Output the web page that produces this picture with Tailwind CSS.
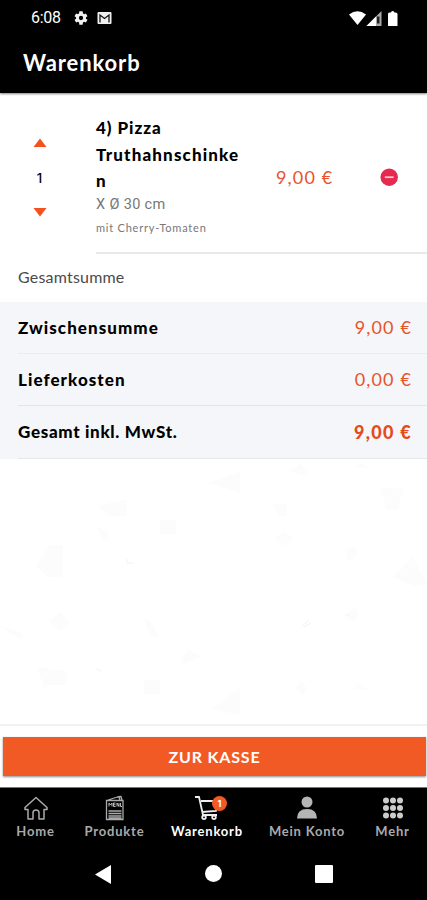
<!DOCTYPE html>
<html lang="de">
<head>
<meta charset="utf-8">
<meta name="viewport" content="width=device-width, initial-scale=1">
<title>Warenkorb</title>
<script src="https://cdn.jsdelivr.net/npm/@tailwindcss/browser@4"></script>
</head>
<body class="bg-white">
<div class="flex h-[900px] w-[427px] flex-col overflow-hidden bg-white font-['Lato',sans-serif] text-black">
  <header class="z-10 h-[93px] shrink-0 bg-black text-white shadow-[0_1px_2px_rgba(0,0,0,0.5)]">
    <div class="flex h-9 items-center pr-[29px] pl-[31px]">
      <span class="w-[42px] font-['Roboto',sans-serif] text-[16px] leading-9 tracking-[-0.3px]">6:08</span>
      <svg class="size-4" viewBox="0 0 24 24" fill="#f2f2f2"><path d="M19.4 13a7.700 7.700 0 0 0 0-2l2.300-1.700-2.300-4-2.700 1.100a8 8 0 0 0-1.800-1L14.500 2h-5l-.4 3.400a8 8 0 0 0-1.800 1L4.600 5.300l-2.300 4L4.600 11a7.700 7.700 0 0 0 0 2l-2.300 1.700 2.300 4 2.700-1.100a8 8 0 0 0 1.800 1l.4 3.400h5l.4-3.400a8 8 0 0 0 1.800-1l2.700 1.100 2.300-4zM12 15.200a3.200 3.200 0 1 1 0-6.400 3.200 3.200 0 0 1 0 6.400z"/></svg>
      <svg class="ml-2 h-3 w-[15px]" viewBox="0 0 15 12"><rect x=".5" width="14" height="12" rx="1" fill="#efefef"/><path d="M3 10.500V3l4.500 3.500L12 3v7.500" fill="none" stroke="#111" stroke-width="1.300"/></svg>
      <svg class="ml-auto h-[15px] w-[49px]" viewBox="0 0 49 15"><path d="M0 3.500Q8.500-3 17 3.500L8.500 14z" fill="#fff"/><path d="M17.500 15 32.500 0v15z" fill="#aaa"/><path d="M17.500 15 27 5.500V15z" fill="#fff"/><path d="M28 5.500h2.500v7H28z" fill="#222"/><path d="M39 3q0-1.500 1.500-1.500H42Q42 0 43.700 0t1.700 1.500h1.100Q48.500 1.500 48.500 3v12H39z" fill="#fff"/></svg>
    </div>
    <h1 class="pt-[12px] pl-[23px] text-[22px] leading-[30px] font-bold tracking-[0.9px]">Warenkorb</h1>
  </header>

  <section class="flex h-[161px] shrink-0">
    <div class="flex w-24 flex-col items-center pt-[45px] pr-[17px]">
      <svg class="h-[9px] w-[14px]" viewBox="0 0 14 9"><path d="M7 .5 13.500 9H.5z" fill="#f4511e"/></svg>
      <span class="my-5 h-[22px] font-['Inter',sans-serif] text-[13px] leading-[22px] font-medium">1</span>
      <svg class="mt-[-1px] h-[9px] w-[14px]" viewBox="0 0 14 9"><path d="M.5 0h13L7 8.500z" fill="#f4511e"/></svg>
    </div>
    <div class="flex flex-1 border-b-2 border-[#e9e9e9]">
      <div class="w-[165px] pt-[22px] whitespace-nowrap">
        <h2 class="text-[17px] leading-[26.5px] font-black tracking-[1.15px]"><span class="tracking-[0.95px]">4) Pizza</span><br>Truthahnschinke<br>n</h2>
        <p class="font-['Roboto',sans-serif] text-[14.5px] leading-5 tracking-[0.35px] text-[#777]">X Ø 30 cm</p>
        <p class="mt-[3px] text-[11px] leading-5 tracking-[0.78px] text-[#777]">mit Cherry-Tomaten</p>
      </div>
      <span class="w-[93px] pt-[70px] pl-[15px] text-[18px] leading-7 tracking-[1.15px] text-[#e7532a]">9,00 €</span>
      <svg class="mt-[75px] ml-[26px] size-[18px]" viewBox="0 0 18 18"><circle cx="9.200" cy="9.200" r="8.700" fill="#e6294f"/><path d="M4.800 9.200h8.800" stroke="#f8c8cf" stroke-width="1.800"/></svg>
    </div>
  </section>

  <h3 class="h-[48px] shrink-0 pl-[18px] text-[16px] leading-[46px] tracking-[0.2px] text-[#4a4a4a]">Gesamtsumme</h3>

  <dl class="shrink-0 bg-[#f4f6fa] pl-[18px] text-[17px]">
    <div class="flex h-[52px] items-center justify-between border-b border-[#e9ebee] pr-[15px]"><dt class="font-black tracking-[1.05px]">Zwischensumme</dt><dd class="text-[18px] tracking-[1.15px] text-[#e7532a]">9,00 €</dd></div>
    <div class="flex h-[52px] items-center justify-between border-b border-[#e2e4e7] pr-[15px]"><dt class="font-black tracking-[1.05px]">Lieferkosten</dt><dd class="text-[18px] tracking-[1.15px] text-[#e7532a]">0,00 €</dd></div>
    <div class="flex h-[53px] items-center justify-between border-b border-[#e5e7ea] pr-[15px]"><dt class="font-black tracking-[0.68px]">Gesamt inkl. MwSt.</dt><dd class="text-[18px] font-black tracking-[1.3px] text-[#e64a19]">9,00 €</dd></div>
  </dl>

  <svg class="h-[265px] w-full shrink-0" viewBox="0 0 427 265" fill="#fcfcfc" aria-hidden="true">
    <path d="M208 24l32-11v21zM97 47l30-7v17h-18zM381 28l22 2-5 20h-12zM273 45h14v12h-8zM160 61h16v14h-16zM96 68l11 4 2 10-6-1zM36 107l14-21h13v32H48zM274 79l10-6 9 6-8 8zM347 90l8-3 3 6-7 9-5-2zM393 118l20-20 14 27-14 2zM48 162l12-9 10 10-9 9zM144 160l7 4 8 13-8 2zM181 200l8-9 12 7-17 7zM37 208l29 4v14H46v7zM144 221h16v14h-16zM212 250l28-22v28zM296 229l6-8 5 10-4 5zM353 230l6-6 10 7zM0 167l24 8-4 5zM290 12l10-7 8 8-5 4zM353 8l8-4 8 5zM344 156l11-8 3 9-4 6z"/>
    <path d="M127 100v4h7M301 168l8-7M304 168l7-4M96 210l6 2M346 156h3" fill="none" stroke="#f3f3f3"/>
  </svg>

  <div class="h-[63px] shrink-0 border-t-2 border-[#f1f1f1] bg-white pt-[11px] pr-px pl-[3px]">
    <button class="block h-[39px] w-full bg-[#f15a24] text-[16px] leading-[38px] font-bold tracking-[0.8px] text-white shadow-[0_1px_2px_rgba(0,0,0,0.45)]">ZUR KASSE</button>
  </div>

  <nav class="flex h-[61px] shrink-0 border-t border-[#777] bg-black pt-[7px] text-[13px] leading-[18px] font-bold tracking-[0.8px] whitespace-nowrap text-[#aaa]">
    <a class="flex w-[71px] flex-col items-center">
      <svg class="h-[27px] w-[26px]" viewBox="0 0 26 27" fill="none" stroke="#aaa" stroke-width="1.500" stroke-linejoin="round"><path d="m2 12.500 11-10 11 10v2h-3V24h-5v-6q0-3-3-3t-3 3v6H5v-9.500H2z"/></svg>Home</a>
    <a class="flex w-[87px] flex-col items-center">
      <svg class="h-[27px] w-[20px]" viewBox="0 0 20 27" fill="none" stroke="#aaa" stroke-width="1.300"><path d="M1.500 5.500h16.500v19H1.500zM3 5l11-3.500.8 3.500M12 2l4-.5 1 4M3.500 16h13M3.500 18.500h13M3.500 21h13M3.500 23h13"/><path d="M4 11.500V8l1.500 2L7 8v3.500M10.500 8H8.500v3.500h2m-2-1.700h2m1.500 1.700V8l2 3.500V8m1.500 0v3.500H17" stroke="#ccc" stroke-width=".9"/></svg>Produkte</a>
    <a class="flex w-[98px] flex-col items-center text-white">
      <span class="relative h-[27px] w-[26px]"><svg class="h-[27px] w-[26px]" viewBox="0 0 26 27" fill="none" stroke="#eee" stroke-width="1.800"><path d="M1 2h4l4 18h14M7 6h18l-3 10-14 1"/><circle cx="10" cy="22.300" r="1.800"/><circle cx="20" cy="22.300" r="1.800"/></svg><span class="absolute top-px left-[18px] size-[15px] rounded-full bg-[#f15a24] text-center font-['Inter',sans-serif] text-[9px] leading-[15px] tracking-normal">1</span></span>Warenkorb</a>
    <a class="flex w-[102px] flex-col items-center">
      <svg class="h-[27px] w-[22px]" viewBox="0 0 22 27" fill="#b5b5b5"><circle cx="11" cy="7" r="5.500"/><path d="M1 23.500Q1 14 11 14t10 9.500z"/></svg>Mein Konto</a>
    <a class="flex w-[69px] flex-col items-center">
      <svg class="h-[27px] w-[22px]" viewBox="0 0 22 27" fill="#ccc"><circle cx="4" cy="5.500" r="3"/><circle cx="11" cy="5.500" r="3"/><circle cx="18" cy="5.500" r="3"/><circle cx="4" cy="13" r="3"/><circle cx="11" cy="13" r="3"/><circle cx="18" cy="13" r="3"/><circle cx="4" cy="20.500" r="3"/><circle cx="11" cy="20.500" r="3"/><circle cx="18" cy="20.500" r="3"/></svg>Mehr</a>
  </nav>
  <footer class="flex flex-1 items-start bg-black pt-[17px] pl-[94px]">
    <svg class="h-[19px] w-[17px]" viewBox="0 0 17 19"><path d="M1 9.500 17 0v19z" fill="#fff"/></svg>
    <span class="ml-[94px] size-[17px] rounded-full bg-white"></span>
    <span class="ml-[93px] size-[18px] rounded-[1px] bg-white"></span>
  </footer>
</div>
</body>
</html>
